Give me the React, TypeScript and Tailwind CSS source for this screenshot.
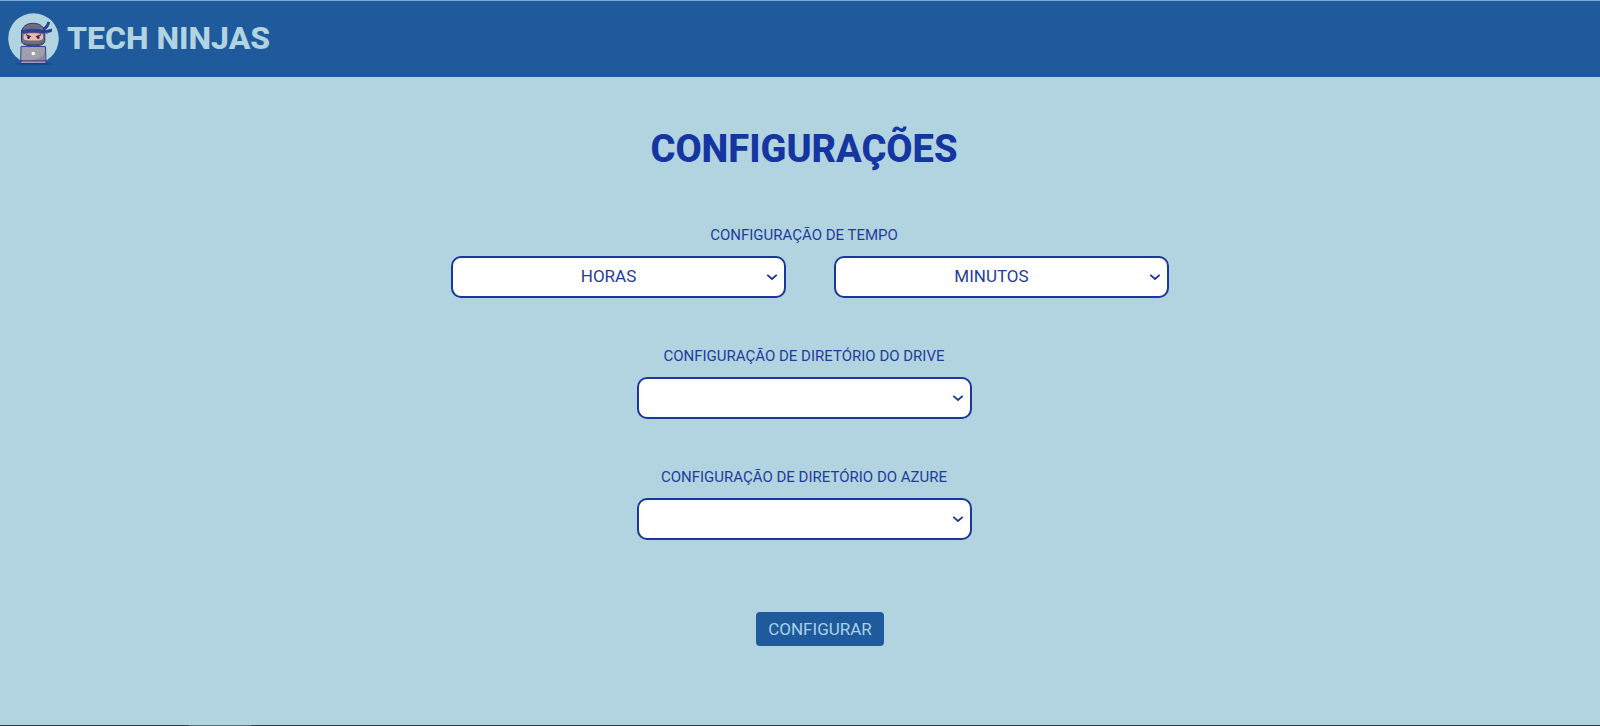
import { useId } from "react";

function NinjaLogo() {
  return (
    <svg viewBox="0 -1 52 54" className="h-[54px] w-[52px] shrink-0" aria-hidden="true">
      <circle cx="25.5" cy="25.500" r="25.3" fill="#b1d4e0" />
      <ellipse cx="25.500" cy="51" rx="18" ry="1.3" fill="#154a8d" />
      <path d="M35 17.500c3-1 5.500-3 6.500-8l-1.800-.5c-.5 3-2.500 5-5.500 6.500z" fill="#23479c" stroke="#1c2f86" strokeWidth=".8" />
      <path d="M35 17.500c3 .3 6-.5 8.500-1.500v2.500c-2.500 1.200-5.500 1-8.500 0z" fill="#23479c" stroke="#1c2f86" strokeWidth=".8" />
      <path d="M36.500 18l3 3" stroke="#1c2f86" strokeWidth="1" />
      <path d="M13.500 20.500c0-7 5.300-10.200 11.700-10.200S36.800 13.500 36.800 20.500v7c0 4-4.800 5.300-11.500 5.300S13.500 31.500 13.500 27.500z" fill="#6e6e82" stroke="#2b3478" strokeWidth="1" />
      <path d="M15.500 21.500c6-1.600 13.500-1.600 19.500 0v4c-1 2-4 2-9.700 2s-8.800 0-9.800-2z" fill="#f0b9a3" />
      <path d="M13.500 17.500c7-1.800 16.500-1.800 23.500 0v2.700c-7-1.300-16.500-1.300-23.500 0z" fill="#23479c" stroke="#1c2f86" strokeWidth=".4" />
      <path d="M18 21.800l5 2M33 21.800l-5 2" stroke="#392855" strokeWidth="1.200" />
      <circle cx="20.500" cy="24.500" r="1.400" fill="#2a1c78" />
      <circle cx="30.200" cy="24.500" r="1.400" fill="#2a1c78" />
      <path d="M15.500 30.500c6 1.500 13.500 1.500 19.500 0" stroke="#4f5068" strokeWidth="1.200" fill="none" />
      <path d="M13 33.500h24.500l.5 17H12.700z" fill="#a09fac" stroke="#34409a" strokeWidth="1" />
      <path d="M37 38v9H22c8 0 13-3 15-9z" fill="#8a89a0" />
      <path d="M12.700 47.800h25.300v2.700H12.700z" fill="#a795a9" stroke="#2a3592" strokeWidth="1" />
      <circle cx="25.300" cy="40.500" r="1.800" fill="#fff" />
    </svg>
  );
}

type DropdownProps = {
  id?: string;
  label?: string;
  placeholder?: string;
  options: string[];
};

function Dropdown({ id, label, placeholder = "", options }: DropdownProps) {
  return (
    <div className="grid w-[335px] max-w-full items-center">
      <select
        id={id}
        aria-label={label}
        defaultValue=""
        className="col-start-1 row-start-1 h-[42px] w-full appearance-none rounded-[10px] border-2 border-[#1a3799] bg-white pr-6 pl-1 text-center text-[17px] text-[#1f3c9c]"
      >
        <option value="">{placeholder}</option>
        {options.map((option) => (
          <option key={option}>{option}</option>
        ))}
      </select>
      <svg
        viewBox="0 0 12 8"
        className="pointer-events-none col-start-1 row-start-1 mr-2 h-2 w-3 justify-self-end"
        fill="none"
        stroke="#1a3799"
        strokeWidth="1.800"
        aria-hidden="true"
      >
        <path d="M1.300 1.800L6 6l4.700-4.200" />
      </svg>
    </div>
  );
}

function DirectoryField({ label, options }: { label: string; options: string[] }) {
  const id = useId();
  return (
    <div className="flex flex-col items-center gap-[11px]">
      <label htmlFor={id} className="text-[15px] leading-5">
        {label}
      </label>
      <Dropdown id={id} options={options} />
    </div>
  );
}

const hours = Array.from({ length: 24 }, (_, i) => String(i));
const minutes = Array.from({ length: 60 }, (_, i) => String(i));

export default function App() {
  return (
    <div className="flex min-h-screen flex-col bg-[#b1d4e0] font-[Roboto,sans-serif] text-[#1f3c9c]">
      <header className="flex h-[77px] items-center gap-[7px] border-t border-[#7fa9d6] bg-[#1e5a9c] pl-2">
        <NinjaLogo />
        <span className="pb-0.5 text-[32px] leading-10 font-extrabold text-[#b1d4e0]">TECH NINJAS</span>
      </header>
      <main className="flex grow flex-col items-center pt-12 pl-2">
        <h1 className="text-[38px] leading-12 font-extrabold text-[#1535a0]">CONFIGURAÇÕES</h1>
        <form className="mt-[52px] flex flex-col items-center gap-12" onSubmit={(e) => e.preventDefault()}>
          <fieldset className="flex flex-col items-center gap-[11px]">
            <legend className="contents">
              <span className="text-[15px] leading-5">CONFIGURAÇÃO DE TEMPO</span>
            </legend>
            <div className="ml-3 flex flex-wrap justify-center gap-12">
              <Dropdown label="Horas" placeholder="HORAS" options={hours} />
              <Dropdown label="Minutos" placeholder="MINUTOS" options={minutes} />
            </div>
          </fieldset>
          <DirectoryField label="CONFIGURAÇÃO DE DIRETÓRIO DO DRIVE" options={["Drive"]} />
          <DirectoryField label="CONFIGURAÇÃO DE DIRETÓRIO DO AZURE" options={["Azure"]} />
          <button
            type="submit"
            className="mt-6 ml-8 rounded bg-[#1e5a9c] px-3 py-[5px] text-[17px] leading-6 text-[#a9d3ea]"
          >
            CONFIGURAR
          </button>
        </form>
      </main>
      <footer className="flex h-px bg-[#2b3b45] pl-[189px]">
        <div className="w-[62px] bg-[#5c7079]" />
      </footer>
    </div>
  );
}
